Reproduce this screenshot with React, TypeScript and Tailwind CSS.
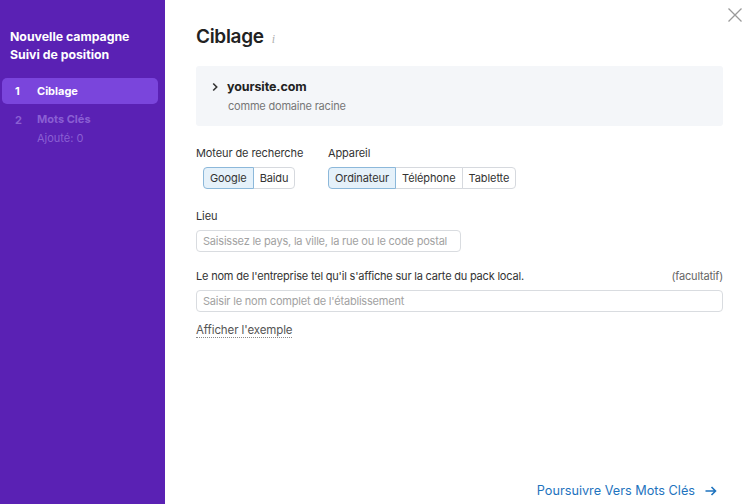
import React, { useState } from 'react';

const FONT = { fontFamily: 'Inter, "Noto Sans", Arial, sans-serif' };

const engines = ['Google', 'Baidu'];
const devices = ['Ordinateur', 'Téléphone', 'Tablette'];

function Segmented({ items, value, onChange }: { items: string[]; value: string; onChange: (v: string) => void }) {
    return (
        <div className="flex h-[22px]">
            {items.map((item, i) => {
                const active = item === value;
                const first = i === 0;
                const last = i === items.length - 1;
                return (
                    <button
                        key={item}
                        onClick={() => onChange(item)}
                        className={[
                            'px-[6px] text-[11px] leading-none border -ml-px first:ml-0',
                            first ? 'rounded-l-[4px]' : '',
                            last ? 'rounded-r-[4px]' : '',
                            active
                                ? 'bg-[#e5f1fa] border-[#8cb8da] text-[#333] relative z-10'
                                : 'bg-white border-[#d6d9de] text-[#333]',
                        ].join(' ')}
                    >
                        {item}
                    </button>
                );
            })}
        </div>
    );
}

export default function App() {
    const [engine, setEngine] = useState('Google');
    const [device, setDevice] = useState('Ordinateur');

    return (
        <div className="flex h-[504px] w-[750px] overflow-hidden bg-white" style={FONT}>
            {/* barre latérale */}
            <aside className="w-[165px] shrink-0 bg-[#5a21b4] pt-[28px]">
                <div className="px-[10px] text-[12.3px] font-bold leading-[18px] text-white">
                    <div>Nouvelle campagne</div>
                    <div>Suivi de position</div>
                </div>
                <div className="mt-[14px] mx-[2px] mr-[7px] flex h-[26px] items-center rounded-[5px] bg-[#7a45dc] text-[11px] font-bold text-white">
                    <span className="w-[35px] pl-[13px]">1</span>
                    <span>Ciblage</span>
                </div>
                <div className="mt-[8px] mx-[2px] flex text-[11px] text-[#8a5fd3]">
                    <span className="w-[35px] pl-[13px] font-bold">2</span>
                    <div>
                        <div className="font-bold leading-[14px]">Mots Clés</div>
                        <div className="mt-[5px] leading-[14px]">Ajouté: 0</div>
                    </div>
                </div>
            </aside>

            {/* contenu */}
            <main className="relative flex flex-1 flex-col pl-[31px] pr-[27px] pt-[24px] pb-[4px] text-[#333]">
                <button className="absolute right-[7px] top-[7px] text-[#9a9a9a]">
                    <svg width="16" height="16" viewBox="0 0 16 16" fill="none" stroke="currentColor" strokeWidth="1.3">
                        <path d="M1.5 1.5l13 13M14.5 1.5l-13 13" />
                    </svg>
                </button>

                <h1 className="flex items-baseline text-[19px] font-semibold leading-[26px] tracking-[-0.3px] text-[#222]">
                    Ciblage
                    <span className="ml-[8px] text-[12px] font-normal italic text-[#b0b0b0]" style={{ fontFamily: '"Liberation Serif", serif' }}>i</span>
                </h1>

                <div className="mt-[14px] h-[60px] rounded-[3px] bg-[#f4f6f9] pl-[16px] pt-[13px]">
                    <div className="flex items-center">
                        <svg width="6" height="10" viewBox="0 0 6 10" fill="none" stroke="#333" strokeWidth="1.6" className="mr-[9px]">
                            <path d="M1.2 1.5l3.5 3.5L1.2 8.5" />
                        </svg>
                        <span className="text-[12.5px] font-bold leading-[16px] tracking-[-0.1px] text-[#222]">yoursite.com</span>
                    </div>
                    <div className="mt-[4px] pl-[16px] text-[11px] leading-[14px] tracking-[-0.2px] text-[#777]">comme domaine racine</div>
                </div>

                <div className="mt-[20px] flex text-[11px] tracking-[-0.1px]">
                    <div className="w-[132px]">
                        <div className="leading-[14px]">Moteur de recherche</div>
                        <div className="mt-[7px] pl-[7px]">
                            <Segmented items={engines} value={engine} onChange={setEngine} />
                        </div>
                    </div>
                    <div>
                        <div className="leading-[14px]">Appareil</div>
                        <div className="mt-[7px]">
                            <Segmented items={devices} value={device} onChange={setDevice} />
                        </div>
                    </div>
                </div>

                <div className="mt-[20px] text-[11px] leading-[14px] tracking-[-0.1px]">Lieu</div>
                <input
                    className="mt-[7px] h-[22px] w-[265px] rounded-[4px] border border-[#d9dce0] px-[6px] text-[11px] tracking-[-0.2px] placeholder:text-[#a2a2a2] outline-none"
                    placeholder="Saisissez le pays, la ville, la rue ou le code postal"
                />

                <div className="mt-[17px] flex justify-between text-[11px] leading-[14px] tracking-[-0.2px]">
                    <span>Le nom de l'entreprise tel qu'il s'affiche sur la carte du pack local.</span>
                    <span className="text-[#666]">(facultatif)</span>
                </div>
                <input
                    className="mt-[7px] h-[22px] w-full rounded-[4px] border border-[#d9dce0] px-[6px] text-[11px] tracking-[-0.2px] placeholder:text-[#a2a2a2] outline-none"
                    placeholder="Saisir le nom complet de l'établissement"
                />
                <div className="mt-[9px] leading-[14px]">
                    <span className="border-b border-dotted border-[#888] text-[11.5px] leading-[14px] tracking-[-0.1px] text-[#555]">Afficher l'exemple</span>
                </div>

                <div className="mt-auto flex justify-end pr-[6px]">
                    <button className="flex items-center text-[12.7px] leading-[18px] text-[#1e73be]">
                        Poursuivre Vers Mots Clés
                        <svg width="12" height="10" viewBox="0 0 12 10" fill="none" stroke="currentColor" strokeWidth="1.6" className="ml-[10px]">
                            <path d="M0.5 5h10M6.5 1l4 4-4 4" />
                        </svg>
                    </button>
                </div>
            </main>
        </div>
    );
}
